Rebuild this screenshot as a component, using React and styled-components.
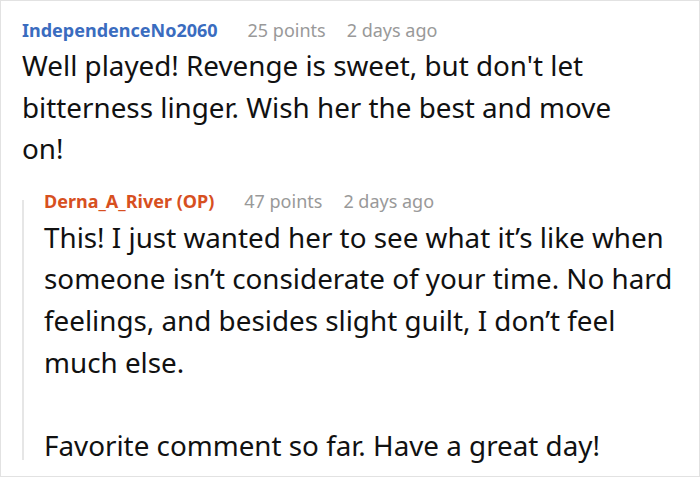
import styled, { createGlobalStyle } from "styled-components";

const GlobalStyle = createGlobalStyle`
  html, body {
    margin: 0;
    padding: 0;
    background: #ffffff;
  }
  body {
    font-family: "Noto Sans", "Open Sans", sans-serif;
  }
`;

const Frame = styled.div`
  box-sizing: border-box;
  width: 700px;
  height: 477px;
  border: 1px solid #e2e2e2;
  padding: 20px 21px 0 21px;
  overflow: hidden;
`;

const Comment = styled.div`
  display: flex;
  flex-direction: column;
`;

const Header = styled.div`
  display: flex;
  align-items: baseline;
  font-size: 18px;
  line-height: 18px;
  white-space: nowrap;
`;

const Author = styled.span`
  font-weight: 700;
  color: ${({ $op }) => ($op ? "#d7501f" : "#3a6cbf")};
  margin-right: 30px;
`;

const Meta = styled.span`
  color: #999999;
  margin-right: 21px;
`;

const Body = styled.p`
  margin: 6px 0 0;
  max-width: ${({ $narrow }) => ($narrow ? "625px" : "none")};
  font-size: 27.8px;
  line-height: 41.6px;
  color: #111111;
  white-space: pre-line;
`;

const Reply = styled.div`
  margin-top: 30px;
  border-left: 2px solid #e6e6e6;
  padding-left: 20px;

  & > ${Header} {
    margin-top: -8px;
  }
  & > ${Body} {
    margin-top: 7px;
    margin-bottom: -6px;
  }
`;

const comments = {
  author: "IndependenceNo2060",
  points: 25,
  time: "2 days ago",
  text: "Well played! Revenge is sweet, but don't let bitterness linger. Wish her the best and move on!",
  reply: {
    author: "Derna_A_River (OP)",
    points: 47,
    time: "2 days ago",
    text: "This! I just wanted her to see what it\u2019s like when someone isn\u2019t considerate of your time. No hard feelings, and besides slight guilt, I don\u2019t feel much else.\n\nFavorite comment so far. Have a great day!",
  },
};

const App = () => {
  const c = comments;
  return (
    <>
      <GlobalStyle />
      <Frame>
        <Comment>
          <Header>
            <Author>{c.author}</Author>
            <Meta>{c.points} points</Meta>
            <Meta>{c.time}</Meta>
          </Header>
          <Body $narrow>{c.text}</Body>
          <Reply>
            <Header>
              <Author $op>{c.reply.author}</Author>
              <Meta>{c.reply.points} points</Meta>
              <Meta>{c.reply.time}</Meta>
            </Header>
            <Body>{c.reply.text}</Body>
          </Reply>
        </Comment>
      </Frame>
    </>
  );
};

export default App;
